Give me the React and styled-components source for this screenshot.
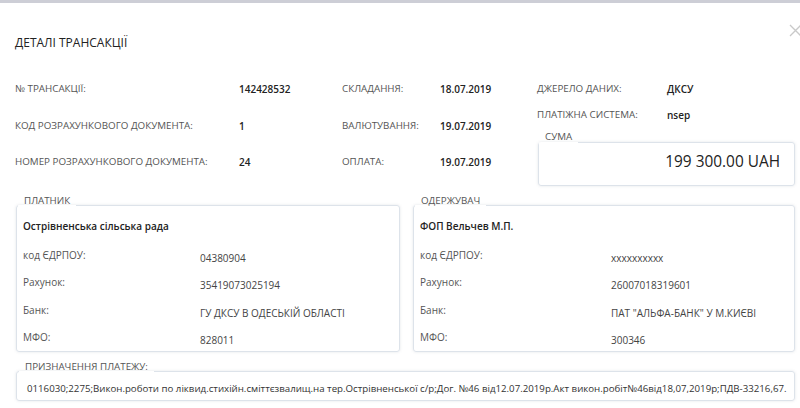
import React from "react";
import styled, { createGlobalStyle } from "styled-components";

const Global = createGlobalStyle`
  html, body { margin: 0; padding: 0; background: #fff; }
  body { font-family: "Open Sans", "Noto Sans", sans-serif; color: #333; overflow: hidden; }
  * { box-sizing: border-box; }
`;

const Page = styled.div`
  width: 800px;
  height: 408px;
  overflow: hidden;
`;

const TopStrip = styled.div`
  height: 3px;
  background: #cdced6;
`;

const Modal = styled.div`
  padding: 0 5px 0 16px;
`;

const Header = styled.div`
  display: flex;
  justify-content: space-between;
  align-items: flex-start;
  height: 79px;
  padding-top: 32px;
  margin-left: -1px;
`;

const Title = styled.h1`
  margin: 0;
  font-size: 12px;
  font-weight: 400;
  color: #222;
  line-height: 16px;
`;

const Close = styled.div`
  margin-top: -15px;
  margin-right: -7px;
  width: 13px;
  height: 13px;
  color: #c9c9c9;
`;

const Info = styled.div`
  display: flex;
  margin-left: -1px;
`;

const InfoGrid = styled.div`
  display: grid;
  grid-template-columns: 224px 103px 98px 97px;
  grid-auto-rows: 36.5px;
  align-items: start;
`;

const Label = styled.div`
  font-size: 9.8px;
  color: #555;
  text-transform: uppercase;
  line-height: 14px;
`;

const Value = styled.div`
  font-size: 10px;
  color: #222;
  font-weight: 600;
  line-height: 14px;
`;

const SideCol = styled.div`
  flex: 1;
  display: flex;
  flex-direction: column;
`;

const SideRow = styled.div`
  display: grid;
  grid-template-columns: 130px 1fr;
  height: 26px;
`;

const Fieldset = styled.fieldset`
  margin: 0;
  padding: 0;
  border: 1px solid #dde3ea;
  border-radius: 3px;
  box-shadow: 0 0 3px rgba(90, 100, 120, 0.16);
  min-width: 0;
`;

const Legend = styled.legend`
  font-size: 9.8px;
  color: #555;
  text-transform: uppercase;
  padding: 0 6px 10px;
  margin-left: ${(p) => p.$inset ?? 1}px;
  line-height: 12px;
`;

const SumBox = styled(Fieldset)`
  margin: -3px 0 0 1px;
  height: 55px;
`;

const Amount = styled.div`
  font-size: 15.4px;
  color: #222;
  text-align: right;
  line-height: 18px;
  padding: 0 14px 0 12px;
`;

const Parties = styled.div`
  display: grid;
  grid-template-columns: 384px 382px;
  gap: 13px;
  margin-top: 3px;
`;

const Party = styled(Fieldset)`
  height: 157px;
`;

const PartyBody = styled.div`
  padding: 2px 0 0 6px;
`;

const PartyName = styled.div`
  font-size: 10px;
  font-weight: 600;
  color: #222;
  line-height: 14px;
  margin-bottom: 15px;
`;

const PartyRow = styled.div`
  display: grid;
  grid-template-columns: ${(p) => p.$col}px 1fr;
  height: 27.5px;
  align-items: start;
`;

const PLabel = styled.div`
  font-size: 10px;
  color: #555;
  line-height: 14px;
`;

const PValue = styled.div`
  font-size: 10px;
  color: #444;
  line-height: 14px;
  padding-top: 3px;
`;

const Purpose = styled(Fieldset)`
  margin-top: 9px;
  width: 779px;
  height: 40px;
`;

const PurposeText = styled.div`
  font-size: 9.7px;
  color: #333;
  white-space: nowrap;
  line-height: 12px;
  padding-left: 10px;
`;

const CloseIcon = () => (
  <svg width="13" height="13" viewBox="0 0 13 13" fill="none" stroke="currentColor" strokeWidth="1.3">
    <path d="M1 1 L12 12 M12 1 L1 12" />
  </svg>
);

const payer = {
  title: "ПЛАТНИК",
  name: "Острівненська сільська рада",
  rows: [
    ["код ЄДРПОУ:", "04380904"],
    ["Рахунок:", "35419073025194"],
    ["Банк:", "ГУ ДКСУ В ОДЕСЬКІЙ ОБЛАСТІ"],
    ["МФО:", "828011"],
  ],
  col: 177,
};

const payee = {
  title: "ОДЕРЖУВАЧ",
  name: "ФОП Вельчев М.П.",
  rows: [
    ["код ЄДРПОУ:", "xxxxxxxxxx"],
    ["Рахунок:", "26007018319601"],
    ["Банк:", "ПАТ \"АЛЬФА-БАНК\" У М.КИЄВІ"],
    ["МФО:", "300346"],
  ],
  col: 191,
};

const PartyBox = ({ data }) => (
  <Party>
    <Legend>{data.title}</Legend>
    <PartyBody>
      <PartyName>{data.name}</PartyName>
      {data.rows.map(([l, v]) => (
        <PartyRow key={l} $col={data.col}>
          <PLabel>{l}</PLabel>
          <PValue>{v}</PValue>
        </PartyRow>
      ))}
    </PartyBody>
  </Party>
);

export default function App() {
  return (
    <Page>
      <Global />
      <TopStrip />
      <Modal>
        <Header>
          <Title>ДЕТАЛІ ТРАНСАКЦІЇ</Title>
          <Close>
            <CloseIcon />
          </Close>
        </Header>
        <Info>
          <InfoGrid>
            <Label>№ ТРАНСАКЦІЇ:</Label>
            <Value>142428532</Value>
            <Label>СКЛАДАННЯ:</Label>
            <Value>18.07.2019</Value>
            <Label>КОД РОЗРАХУНКОВОГО ДОКУМЕНТА:</Label>
            <Value>1</Value>
            <Label>ВАЛЮТУВАННЯ:</Label>
            <Value>19.07.2019</Value>
            <Label>НОМЕР РОЗРАХУНКОВОГО ДОКУМЕНТА:</Label>
            <Value>24</Value>
            <Label>ОПЛАТА:</Label>
            <Value>19.07.2019</Value>
          </InfoGrid>
          <SideCol>
            <SideRow>
              <Label>ДЖЕРЕЛО ДАНИХ:</Label>
              <Value>ДКСУ</Value>
            </SideRow>
            <SideRow>
              <Label>ПЛАТІЖНА СИСТЕМА:</Label>
              <Value>nsep</Value>
            </SideRow>
            <SumBox>
              <Legend $inset={0}>СУМА</Legend>
              <Amount>199 300.00 UAH</Amount>
            </SumBox>
          </SideCol>
        </Info>
        <Parties>
          <PartyBox data={payer} />
          <PartyBox data={payee} />
        </Parties>
        <Purpose>
          <Legend $inset={2}>ПРИЗНАЧЕННЯ ПЛАТЕЖУ:</Legend>
          <PurposeText>
            0116030;2275;Викон.роботи по ліквид.стихійн.сміттєзвалищ.на тер.Острівненської с/р;Дог. №46 від12.07.2019р.Акт викон.робіт№46від18,07,2019р;ПДВ-33216,67.
          </PurposeText>
        </Purpose>
      </Modal>
    </Page>
  );
}
